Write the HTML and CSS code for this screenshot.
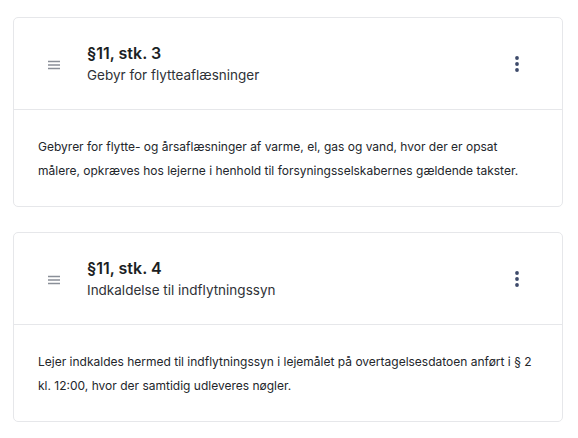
FILE: index.html
```html
<!DOCTYPE html>
<html lang="da">
<head>
<meta charset="utf-8">
<link rel="stylesheet" href="styles.css">
</head>
<body>
<div class="list">
  <section class="card">
    <header class="card-head">
      <span class="handle">
        <svg width="14" height="10" viewBox="0 0 14 10"><path d="M1 1.5h12M1 5h12M1 8.5h12" stroke="#8a8f98" stroke-width="1.3" fill="none"/></svg>
      </span>
      <div class="titles">
        <div class="title">§11, stk. 3</div>
        <div class="subtitle">Gebyr for flytteaflæsninger</div>
      </div>
      <button class="more" aria-label="Mere">
        <svg width="6" height="18" viewBox="0 0 6 18"><circle cx="3" cy="3" r="1.9" fill="#3d4a6a"/><circle cx="3" cy="9" r="1.9" fill="#3d4a6a"/><circle cx="3" cy="15" r="1.9" fill="#3d4a6a"/></svg>
      </button>
    </header>
    <div class="card-body">
      <p>Gebyrer for flytte- og årsaflæsninger af varme, el, gas og vand, hvor der er opsat målere, opkræves hos lejerne i henhold til forsyningsselskabernes gældende takster.</p>
    </div>
  </section>
  <section class="card">
    <header class="card-head">
      <span class="handle">
        <svg width="14" height="10" viewBox="0 0 14 10"><path d="M1 1.5h12M1 5h12M1 8.5h12" stroke="#8a8f98" stroke-width="1.3" fill="none"/></svg>
      </span>
      <div class="titles">
        <div class="title">§11, stk. 4</div>
        <div class="subtitle">Indkaldelse til indflytningssyn</div>
      </div>
      <button class="more" aria-label="Mere">
        <svg width="6" height="18" viewBox="0 0 6 18"><circle cx="3" cy="3" r="1.9" fill="#3d4a6a"/><circle cx="3" cy="9" r="1.9" fill="#3d4a6a"/><circle cx="3" cy="15" r="1.9" fill="#3d4a6a"/></svg>
      </button>
    </header>
    <div class="card-body">
      <p>Lejer indkaldes hermed til indflytningssyn i lejemålet på overtagelsesdatoen anført i § 2 kl. 12:00, hvor der samtidig udleveres nøgler.</p>
    </div>
  </section>
</div>
</body>
</html>
```
FILE: styles.css
```css
* { box-sizing: border-box; }
html, body { margin: 0; padding: 0; background: #fff; }
body {
  font-family: Inter, "Noto Sans", "Liberation Sans", sans-serif;
  color: #1f2937;
}
.list {
  display: flex;
  flex-direction: column;
  gap: 25px;
  padding: 17px 15px 0 13px;
}
.card {
  border: 1px solid #e6e7ea;
  border-radius: 5px;
  background: #fff;
}
.card-head {
  display: flex;
  align-items: center;
  height: 92px;
  padding: 0 23px 0 24px;
  border-bottom: 1px solid #e6e7ea;
}
.handle {
  width: 32px;
  display: flex;
  justify-content: center;
  align-items: center;
  margin-right: 17px;
  margin-top: 2px;
}
.handle svg { display: block; }
.titles { flex: 1; }
.title {
  font-size: 16px;
  font-weight: 600;
  line-height: 22px;
  color: #1c1f24;
}
.subtitle {
  font-size: 13.5px;
  line-height: 20px;
  color: #2f3237;
  margin-top: 1px;
}
.more {
  width: 44px;
  height: 32px;
  border: 0;
  background: transparent;
  padding: 0;
  display: flex;
  justify-content: center;
  align-items: center;
  margin-top: 1px;
}
.more svg { display: block; }
.card-body {
  padding: 25px 24px 23px;
}
.card-body p {
  margin: 0;
  font-size: 12px;
  line-height: 24px;
  color: #23262b;
}
```
